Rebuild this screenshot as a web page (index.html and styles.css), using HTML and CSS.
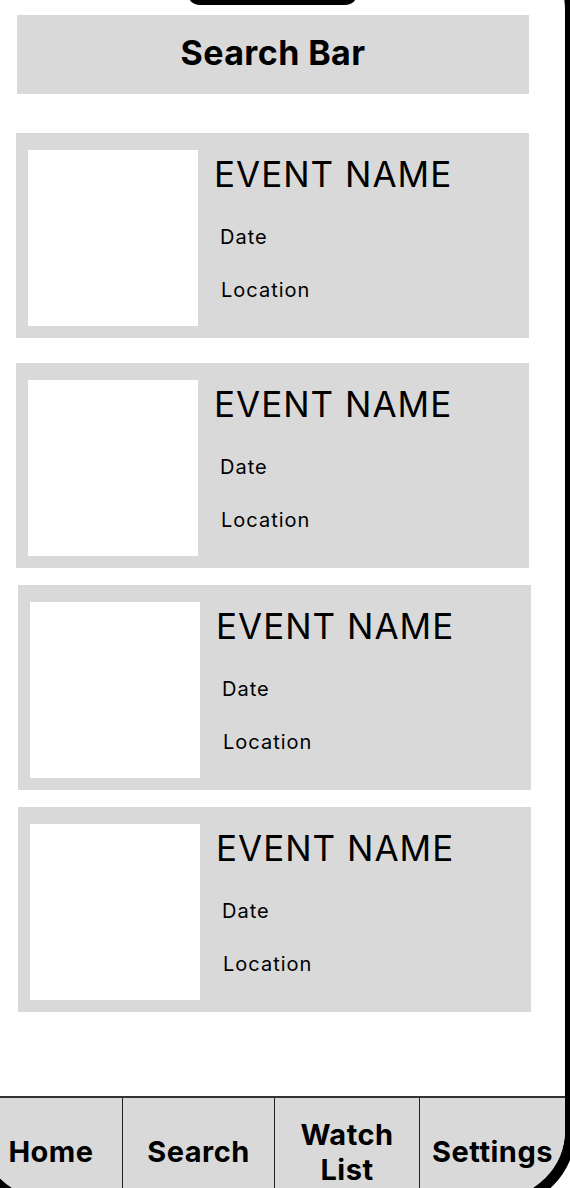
FILE: index.html
```html
<!DOCTYPE html>
<html lang="en">
<head>
<meta charset="utf-8">
<title>Events</title>
<link rel="stylesheet" href="styles.css">
</head>
<body>
<div class="device">
  <div class="notch"></div>
  <div class="search">Search Bar</div>
  <div class="list">
    <div class="card">
      <div class="thumb"></div>
      <div class="info">
        <div class="title">EVENT NAME</div>
        <div class="date">Date</div>
        <div class="loc">Location</div>
      </div>
    </div>
    <div class="card card--second">
      <div class="thumb"></div>
      <div class="info">
        <div class="title">EVENT NAME</div>
        <div class="date">Date</div>
        <div class="loc">Location</div>
      </div>
    </div>
    <div class="card card--shift">
      <div class="thumb"></div>
      <div class="info">
        <div class="title">EVENT NAME</div>
        <div class="date">Date</div>
        <div class="loc">Location</div>
      </div>
    </div>
    <div class="card card--shift">
      <div class="thumb"></div>
      <div class="info">
        <div class="title">EVENT NAME</div>
        <div class="date">Date</div>
        <div class="loc">Location</div>
      </div>
    </div>
  </div>
  <nav class="tabbar">
    <div class="tab">Home</div>
    <div class="tab">Search</div>
    <div class="tab">Watch<br>List</div>
    <div class="tab">Settings</div>
  </nav>
</div>
</body>
</html>
```
FILE: styles.css
```css
html, body {
  margin: 0;
  padding: 0;
  height: 1188px;
  overflow: hidden;
  background: #fff;
}
body {
  font-family: Inter, "Noto Sans", sans-serif;
  color: #000;
}
.device {
  box-sizing: content-box;
  width: 585px;
  height: 1256px;
  margin: -69px 0 0 -31px;
  border: 11px solid #000;
  border-radius: 79px;
  background: #fff;
  overflow: hidden;
  display: flex;
  flex-direction: column;
}
.notch {
  width: 171px;
  height: 63px;
  margin: 0 auto;
  background: #000;
  border-radius: 0 0 13px 13px;
  flex: none;
}
.search {
  flex: none;
  width: 512px;
  height: 79px;
  margin: 10px 0 0 37px;
  background: #d9d9d9;
  display: flex;
  align-items: center;
  justify-content: center;
  font-weight: 700;
  font-size: 34px;
  letter-spacing: 0.4px;
  padding-bottom: 4px;
  box-sizing: border-box;
}
.list {
  flex: none;
  margin-top: 39px;
  display: flex;
  flex-direction: column;
  gap: 17px;
}
.card {
  width: 513px;
  height: 205px;
  margin-left: 36px;
  box-sizing: border-box;
  padding: 17px 12px 12px 12px;
  background: #d9d9d9;
  display: flex;
}
.card--second {
  margin-top: 8px;
}
.card--shift {
  margin-left: 38px;
}
.thumb {
  width: 170px;
  height: 176px;
  background: #fff;
  flex: none;
}
.info {
  padding-left: 16px;
  display: flex;
  flex-direction: column;
}
.title {
  margin-top: 3px;
  font-size: 35px;
  line-height: 42px;
  font-weight: 400;
  letter-spacing: 1px;
}
.date {
  margin-top: 30px;
  margin-left: 6px;
  font-size: 20px;
  line-height: 24px;
  letter-spacing: 1px;
}
.loc {
  margin-top: 29px;
  margin-left: 7px;
  font-size: 20px;
  line-height: 24px;
  letter-spacing: 1px;
}
.tabbar {
  margin-top: auto;
  flex: none;
  height: 102px;
  box-sizing: border-box;
  border-top: 2px solid #333;
  background: #d9d9d9;
  display: grid;
  grid-template-columns: 142px 152px 145px 146px;
}
.tab {
  display: flex;
  align-items: center;
  justify-content: center;
  text-align: center;
  padding-top: 7px;
  font-weight: 700;
  font-size: 29px;
  line-height: 35px;
  letter-spacing: 0.5px;
}
.tab + .tab {
  border-left: 1.5px solid #222;
}
```
